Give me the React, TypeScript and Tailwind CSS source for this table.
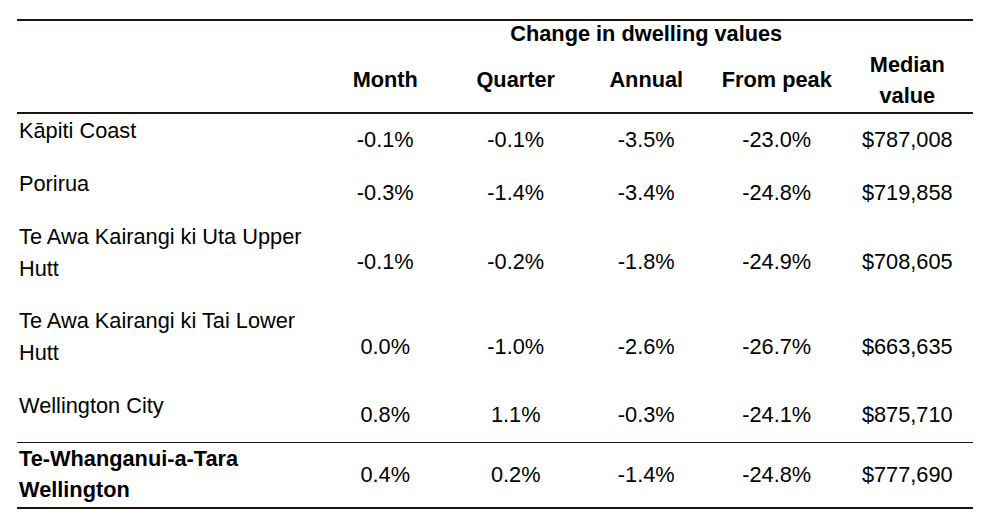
const rows = [
  { name: "Kāpiti Coast", values: ["-0.1%", "-0.1%", "-3.5%", "-23.0%", "$787,008"] },
  { name: "Porirua", values: ["-0.3%", "-1.4%", "-3.4%", "-24.8%", "$719,858"] },
  { name: "Te Awa Kairangi ki Uta Upper Hutt", values: ["-0.1%", "-0.2%", "-1.8%", "-24.9%", "$708,605"] },
  { name: "Te Awa Kairangi ki Tai Lower Hutt", values: ["0.0%", "-1.0%", "-2.6%", "-26.7%", "$663,635"] },
  { name: "Wellington City", values: ["0.8%", "1.1%", "-0.3%", "-24.1%", "$875,710"] },
];

const total = {
  name: "Te-Whanganui-a-Tara Wellington",
  values: ["0.4%", "0.2%", "-1.4%", "-24.8%", "$777,690"],
};

const cols = "grid grid-cols-[303px_130.5px_130.5px_130.5px_130.5px_130.5px]";

export default function App() {
  return (
    <div
      className="min-h-screen bg-white pt-[19px] pl-[17px] text-[21.75px] text-black"
      style={{ fontFamily: '"Liberation Sans", Arial, sans-serif' }}
    >
      <div className="w-[955.5px]">
        {/* Header */}
        <div className="border-t-2 border-b-2 border-[#1e150c] font-bold">
          <div className={`${cols} h-[26px]`}>
            <div className="col-start-2 col-span-5 text-center leading-[26px]">
              Change in dwelling values
            </div>
          </div>
          <div className={`${cols} h-[65px] items-center text-center leading-[31px]`}>
            <div />
            <div>Month</div>
            <div>Quarter</div>
            <div>Annual</div>
            <div>From peak</div>
            <div>
              Median
              <br />
              value
            </div>
          </div>
        </div>

        {/* Body */}
        {rows.map((row) => (
          <div key={row.name} className={`${cols} items-center`}>
            <div className="self-start pt-px pl-[2px] pr-2">
              <p className="mb-[19.75px] leading-[32px]">{row.name}</p>
            </div>
            {row.values.map((v, i) => (
              <div key={i} className="text-center leading-[32px]">
                {v}
              </div>
            ))}
          </div>
        ))}

        {/* Region total */}
        <div className={`${cols} items-center border-t border-b-2 border-[#1e150c]`}>
          <div className="pb-[2px] pl-[2px] pr-2 font-bold leading-[31px]">
            {total.name}
          </div>
          {total.values.map((v, i) => (
            <div key={i} className="text-center leading-[32px]">
              {v}
            </div>
          ))}
        </div>
      </div>
    </div>
  );
}
